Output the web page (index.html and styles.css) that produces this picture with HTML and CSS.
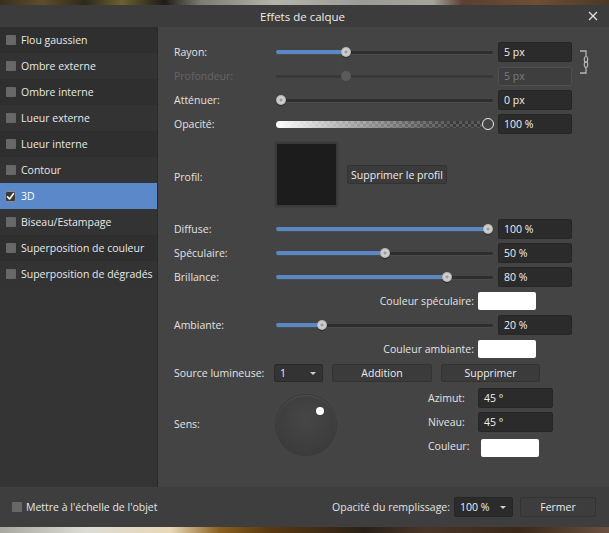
FILE: index.html
```html
<!DOCTYPE html>
<html lang="fr">
<head>
<meta charset="utf-8">
<title>Effets de calque</title>
<link rel="stylesheet" href="styles.css">
</head>
<body>
<div class="photo photo-top"></div>
<div class="dialog">
  <header class="titlebar">
    <span class="title">Effets de calque</span>
    <svg class="close" width="10" height="10" viewBox="0 0 10 10"><path d="M1 1 L9 9 M9 1 L1 9" stroke="#e0e0e0" stroke-width="1.3" fill="none"/></svg>
  </header>
  <div class="body">
    <ul class="effects">
      <li class="effect"><span class="check"></span>Flou gaussien</li>
      <li class="effect"><span class="check"></span>Ombre externe</li>
      <li class="effect"><span class="check"></span>Ombre interne</li>
      <li class="effect"><span class="check"></span>Lueur externe</li>
      <li class="effect"><span class="check"></span>Lueur interne</li>
      <li class="effect"><span class="check"></span>Contour</li>
      <li class="effect selected"><span class="check checked"><svg width="9" height="9" viewBox="0 0 9 9"><path d="M1.5 4.8 L3.6 7 L7.6 1.6" stroke="#fff" stroke-width="1.6" fill="none" stroke-linecap="round" stroke-linejoin="round"/></svg></span>3D</li>
      <li class="effect"><span class="check"></span>Biseau/Estampage</li>
      <li class="effect"><span class="check"></span>Superposition de couleur</li>
      <li class="effect"><span class="check"></span>Superposition de dégradés</li>
    </ul>
    <main class="panel">
      <div class="grid-block">
        <span class="label">Rayon:</span>
        <div class="slider" style="--v:0.314"><div class="track"></div><div class="fill"></div><div class="knob"></div></div>
        <div class="field">5 px</div>
        <svg class="link" width="12" height="24" viewBox="0 0 12 24"><path d="M2 1 H8 V6.5 M8 17.5 V23 H2" stroke="#b4b4b4" stroke-width="1.3" fill="none"/><ellipse cx="8" cy="9.5" rx="1.7" ry="3" stroke="#b4b4b4" stroke-width="1.2" fill="none"/><ellipse cx="8" cy="14.5" rx="1.7" ry="3" stroke="#b4b4b4" stroke-width="1.2" fill="none"/></svg>

        <span class="label disabled">Profondeur:</span>
        <div class="slider off" style="--v:0.314"><div class="track"></div><div class="knob"></div></div>
        <div class="field disabled">5 px</div>

        <span class="label">Atténuer:</span>
        <div class="slider" style="--v:0"><div class="track"></div><div class="knob"></div></div>
        <div class="field">0 px</div>

        <span class="label">Opacité:</span>
        <div class="slider opacity"><div class="checker"></div><div class="ring"></div></div>
        <div class="field">100 %</div>
      </div>

      <div class="profile-row">
        <span class="label">Profil:</span>
        <div class="profile-box"></div>
        <button class="btn btn-profile">Supprimer le profil</button>
      </div>

      <div class="rows">
        <div class="row">
          <span class="label">Diffuse:</span>
          <div class="slider" style="--v:1"><div class="track"></div><div class="fill"></div><div class="knob"></div></div>
          <div class="field">100 %</div>
        </div>
        <div class="row">
          <span class="label">Spéculaire:</span>
          <div class="slider" style="--v:0.5"><div class="track"></div><div class="fill"></div><div class="knob"></div></div>
          <div class="field">50 %</div>
        </div>
        <div class="row">
          <span class="label">Brillance:</span>
          <div class="slider" style="--v:0.8"><div class="track"></div><div class="fill"></div><div class="knob"></div></div>
          <div class="field">80 %</div>
        </div>
        <div class="color-row">
          <span class="label">Couleur spéculaire:</span>
          <span class="swatch"></span>
        </div>
        <div class="row">
          <span class="label">Ambiante:</span>
          <div class="slider" style="--v:0.2"><div class="track"></div><div class="fill"></div><div class="knob"></div></div>
          <div class="field">20 %</div>
        </div>
        <div class="color-row">
          <span class="label">Couleur ambiante:</span>
          <span class="swatch"></span>
        </div>
        <div class="source-row">
          <span class="label source-label">Source lumineuse:</span>
          <div class="select select-source"><span>1</span><span class="caret"></span></div>
          <button class="btn btn-add">Addition</button>
          <button class="btn btn-del">Supprimer</button>
        </div>
        <div class="sens">
          <span class="label sens-label">Sens:</span>
          <div class="dial"><span class="dial-dot"></span></div>
          <div class="angles">
            <span class="label">Azimut:</span>
            <div class="field">45 °</div>
            <span class="label">Niveau:</span>
            <div class="field">45 °</div>
            <span class="label">Couleur:</span>
            <span class="swatch swatch-light"></span>
          </div>
        </div>
      </div>
    </main>
  </div>
  <footer class="footer">
    <label class="scale"><span class="check"></span>Mettre à l'échelle de l'objet</label>
    <div class="footer-right">
      <span class="label">Opacité du remplissage:</span>
      <div class="select select-fill"><span>100 %</span><span class="caret"></span></div>
      <button class="btn btn-close">Fermer</button>
    </div>
  </footer>
</div>
<div class="photo photo-bottom"></div>
</body>
</html>
```

FILE: styles.css
```css
* { box-sizing: border-box; }

html, body {
  margin: 0;
  padding: 0;
  width: 609px;
  height: 533px;
  overflow: hidden;
  background: #3d3d3d;
  font-family: "Open Sans", "Noto Sans", sans-serif;
  font-size: 10.5px;
  color: #e4e4e4;
}

.photo { height: 5px; }
.photo-top {
  background: linear-gradient(to right, #3a3020 0%, #5e4c2a 7%, #2c2a1c 14%, #6b6030 20%, #1e1c16 27%, #7c7c74 33%, #b4b4ac 45%, #9c9c96 60%, #a4a49c 71%, #5a4030 76%, #6e4e34 88%, #4a3828 100%);
}
.photo-bottom {
  height: 6px;
  background: linear-gradient(to right, #a8a8a0 0%, #dcdcd4 14%, #e8d8b8 28%, #8a6020 36%, #5a3a12 44%, #2a2018 60%, #4a3628 70%, #3a2818 85%, #6a5040 100%);
}

.dialog {
  height: 522px;
  display: flex;
  flex-direction: column;
  background: #444;
}

.titlebar {
  height: 22px;
  flex: none;
  background: #3c3c3c;
  display: flex;
  align-items: center;
  justify-content: center;
  position: relative;
}
.title {
  font-size: 11.5px;
  color: #ececec;
  margin-left: -4px;
}
.close {
  position: absolute;
  right: 11px;
  top: 6px;
}

.body {
  flex: 1;
  display: flex;
  min-height: 0;
}

.effects {
  list-style: none;
  margin: 0;
  padding: 0;
  width: 158px;
  flex: none;
  background: #343434;
  border-right: 1px solid #2a2a2a;
}
.effect {
  height: 26px;
  display: flex;
  align-items: center;
  gap: 5px;
  padding-left: 6px;
  color: #e8e8e8;
  white-space: nowrap;
}
.effect:nth-child(odd) { background: #2f2f2f; }
.effect:nth-child(even) { background: #333333; }
.effect.selected { background: #5b88c8; color: #fff; }

.check {
  width: 10px;
  height: 10px;
  flex: none;
  background: #686868;
  border-radius: 1px;
  display: inline-block;
}
.check.checked {
  width: 11px;
  height: 11px;
  background: #3a3a3a;
  border: 1px solid #8a8a8a;
  border-radius: 2px;
  display: flex;
  align-items: center;
  justify-content: center;
  margin-left: -1px;
}

.panel {
  flex: 1;
  padding: 13px 0 0 16px;
}

.label { color: #e2e2e2; white-space: nowrap; }
.label.disabled { color: #666; }

.grid-block,
.row {
  display: grid;
  grid-template-columns: 97px 217px 74px 12px;
  column-gap: 5px;
  grid-auto-rows: 24px;
  align-items: center;
}
.grid-block > .label { grid-column: 1; }
.grid-block > .slider { grid-column: 2; }
.grid-block > .field { grid-column: 3; }
.row { grid-template-columns: 97px 217px 74px; height: 24px; }

.link {
  grid-column: 4;
  grid-row: 1 / span 2;
  margin-top: -5px;
  margin-left: 1px;
}

.field {
  height: 20px;
  background: #2b2b2b;
  border: 1px solid #262626;
  border-radius: 2px;
  padding-left: 5px;
  line-height: 18px;
  color: #f0f0f0;
}
.field.disabled {
  height: 19px;
  line-height: 17px;
  background: #3e3e3e;
  border-color: #4e4e4e;
  color: #7c7c7c;
}

.slider {
  position: relative;
  height: 12px;
  --v: 0;
}
.track {
  position: absolute;
  left: 0;
  right: 0;
  top: 5px;
  height: 3px;
  background: #2e2e2e;
  border-radius: 2px;
  box-shadow: 0 1px 0 #4c4c4c;
}
.fill {
  position: absolute;
  left: 0;
  top: 4px;
  height: 4px;
  width: calc(5px + (100% - 10px) * var(--v));
  background: #5b87c4;
  border-radius: 2px;
}
.knob {
  position: absolute;
  top: 1px;
  left: calc((100% - 10px) * var(--v));
  width: 10px;
  height: 10px;
  border-radius: 50%;
  background: radial-gradient(circle at 50% 50%, #9c9c9c 0 1.2px, #d4d4d4 2px, #c4c4c4 4px, #a8a8a8 5px);
  box-shadow: 0 1px 1px rgba(0,0,0,0.4);
}
.slider.off .track { background: #393939; box-shadow: 0 1px 0 #464646; }
.slider.off .knob { background: #5a5a5a; box-shadow: none; }

.slider.opacity { height: 12px; }
.checker {
  position: absolute;
  left: 0;
  top: 3px;
  width: 208px;
  height: 7px;
  border-radius: 4px;
  background:
    linear-gradient(to right, #ffffff 0%, rgba(255,255,255,0.55) 35%, rgba(255,255,255,0) 85%),
    repeating-conic-gradient(#5a5a5a 0 25%, #3a3a3a 0 50%) 0 0 / 6px 6px;
}
.ring {
  position: absolute;
  right: -1px;
  top: 0;
  width: 12px;
  height: 12px;
  border-radius: 50%;
  border: 1.5px solid #ececec;
}

.profile-row {
  display: flex;
  align-items: center;
  height: 65px;
  margin-top: 6px;
}
.profile-row .label { width: 101px; margin-top: 5px; }
.profile-box {
  width: 63px;
  height: 65px;
  background: #1c1c1c;
  border: 2px solid #3a3a3a;
  border-radius: 3px;
  box-shadow: 0 0 0 1px #404040;
}

.btn {
  font-family: inherit;
  font-size: 10.5px;
  color: #ececec;
  background: #3b3b3b;
  border: 1px solid #333;
  border-radius: 2px;
  height: 19px;
  padding: 0;
  line-height: 16px;
}
.btn-profile { width: 100px; margin-left: 9px; }

.rows {
  margin-top: 10px;
  display: flex;
  flex-direction: column;
}

.color-row {
  height: 24px;
  width: 362px;
  display: flex;
  align-items: center;
  justify-content: flex-end;
  gap: 4px;
}
.swatch {
  display: inline-block;
  width: 58px;
  height: 18px;
  background: #fff;
  border-radius: 2px;
}

.source-row {
  height: 24px;
  display: flex;
  align-items: center;
}
.source-label { width: 100px; }
.select {
  height: 18px;
  background: #333;
  border: 1px solid #2a2a2a;
  border-radius: 2px;
  display: flex;
  align-items: center;
  justify-content: space-between;
  padding: 0 6px 0 5px;
  color: #f0f0f0;
}
.caret {
  width: 0;
  height: 0;
  border-left: 3px solid transparent;
  border-right: 3px solid transparent;
  border-top: 3px solid #cfcfcf;
}
.select-source { width: 49px; }
.btn-add { width: 100px; margin-left: 9px; height: 18px; }
.btn-del { width: 99px; margin-left: 9px; height: 18px; }

.sens {
  display: flex;
  height: 75px;
}
.sens-label { width: 102px; align-self: center; margin-top: 2px; }
.dial {
  position: relative;
  width: 60px;
  height: 60px;
  margin-top: 10px;
  border-radius: 50%;
  background: radial-gradient(circle at 50% 40%, #464646 0%, #3e3e3e 60%, #383838 100%);
  box-shadow: inset 0 1px 1px rgba(255,255,255,0.08), 0 0 0 1px #3a3a3a;
}
.dial-dot {
  position: absolute;
  left: 40px;
  top: 12px;
  width: 8px;
  height: 8px;
  border-radius: 50%;
  background: #fff;
}
.angles {
  margin-left: 92px;
  margin-top: 1px;
  display: grid;
  grid-template-columns: 50px 75px;
  grid-auto-rows: 24px;
  align-items: center;
}
.swatch-light { margin-left: 3px; margin-top: 4px; }

.footer {
  height: 40px;
  flex: none;
  background: #3e3e3e;
  display: flex;
  align-items: center;
  padding: 0 13px 0 12px;
}
.scale {
  display: flex;
  align-items: center;
  gap: 4px;
  color: #e6e6e6;
}
.footer-right {
  margin-left: auto;
  display: flex;
  align-items: center;
}
.select-fill {
  width: 59px;
  height: 20px;
  margin-left: 4px;
  background: #2b2b2b;
  border-color: #262626;
}
.btn-close {
  width: 76px;
  height: 20px;
  margin-left: 7px;
  background: #3d3d3d;
}
```
